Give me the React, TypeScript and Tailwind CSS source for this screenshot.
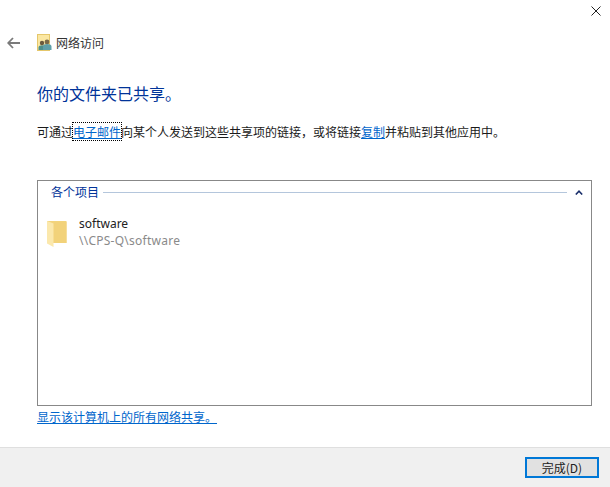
const cjk = "font-['Noto_Sans_CJK_SC','Liberation_Sans',sans-serif]";

function NetworkIcon() {
  return (
    <svg width="15" height="17" viewBox="0 0 15 17">
      <rect x="0.5" y="0.5" width="12" height="16" fill="#fbe7a2" stroke="#e5c76b" />
      <circle cx="5" cy="9" r="2.2" fill="#6b5a3e" />
      <path d="M1.5 16v-2.5c0-1.5 1.5-2.3 3.5-2.3s3.500.8 3.500 2.300V16z" fill="#4f8f8a" />
      <circle cx="10" cy="8" r="2.4" fill="#7a6a4a" />
      <path d="M6 16v-3.5c0-1.600 1.800-2.400 4-2.400s4.500.8 4.500 2.400V16z" fill="#5f9fa8" />
    </svg>
  );
}

function FolderIcon() {
  return (
    <svg width="20" height="28" viewBox="0 0 20 28">
      <path d="M0 2h19.500v22H6z" fill="#f3d47c" />
      <path d="M6.500 3h13v21H6.500z" fill="#f2d27a" />
      <path d="M0 2l6.500 2.500V28L0 24.500z" fill="#fbe8ac" />
    </svg>
  );
}

export default function App() {
  return (
    <div className={`w-[610px] h-[487px] bg-white flex flex-col overflow-hidden text-[12px] leading-[16px] text-[#1a1a1a] ${cjk}`}>
      <div className="h-[447px] flex flex-col">
        <div className="h-[22px] flex justify-end pr-[9px] pt-[6px]">
          <svg width="10" height="10" viewBox="0 0 10 10">
            <path d="M0.500 0.500l9 9M9.500 0.500l-9 9" stroke="#222" strokeWidth="1" fill="none" />
          </svg>
        </div>
        <div className="mt-[12px] h-[17px] flex items-center pl-[7px]">
          <svg width="13" height="12" viewBox="0 0 13 12">
            <path d="M6 1L1.200 6 6 11M1.500 6H13" stroke="#7a7a7a" strokeWidth="1.800" fill="none" />
          </svg>
          <div className="ml-[17px]"><NetworkIcon /></div>
          <span className="ml-[4px] text-[#333]">网络访问</span>
        </div>
        <h1 className="ml-[37px] mt-[31px] text-[16px] leading-[22px] font-normal text-[#003399]">你的文件夹已共享。</h1>
        <p className="ml-[37px] mt-[20px] whitespace-nowrap">
          可通过<a className="text-[#0066cc] underline outline-1 outline-dotted outline-black">电子邮件</a>向某个人发送到这些共享项的链接，或将链接<a className="text-[#0066cc] underline">复制</a>并粘贴到其他应用中。
        </p>
        <div className="ml-[37px] mt-[40px] w-[555px] h-[226px] border border-[#888] flex flex-col">
          <div className="h-[22px] flex items-center pl-[13px] pr-[8px]">
            <span className="text-[#003399]">各个项目</span>
            <div className="ml-[4px] flex-1 h-px bg-[#b4c6dc]" />
            <svg className="ml-[8px]" width="8" height="5" viewBox="0 0 8 5">
              <path d="M0.800 4.500L4 1.200l3.200 3.300" stroke="#1a2f6b" strokeWidth="1.600" fill="none" />
            </svg>
          </div>
          <div className="mt-[13px] pl-[9px] flex items-center">
            <FolderIcon />
            <div className="ml-[12px] font-['Noto_Sans','Noto_Sans_CJK_SC',sans-serif]">
              <div className="text-[#222] h-[17px]">software</div>
              <div className="text-[#8a8a8a] h-[17px] tracking-[0.25px]">\\CPS-Q\software</div>
            </div>
          </div>
        </div>
        <a className="ml-[37px] mt-[3px] text-[#0066cc] underline w-fit">显示该计算机上的所有网络共享。</a>
      </div>
      <div className="flex-1 bg-[#f0f0f0] border-t border-[#dfdfdf] flex justify-end pt-[9px] pr-[11px]">
        <button className="w-[74px] h-[21px] bg-[#e1e1e1] border-2 border-[#0078d7] flex items-center justify-center text-[#222]">完成(D)</button>
      </div>
    </div>
  );
}
